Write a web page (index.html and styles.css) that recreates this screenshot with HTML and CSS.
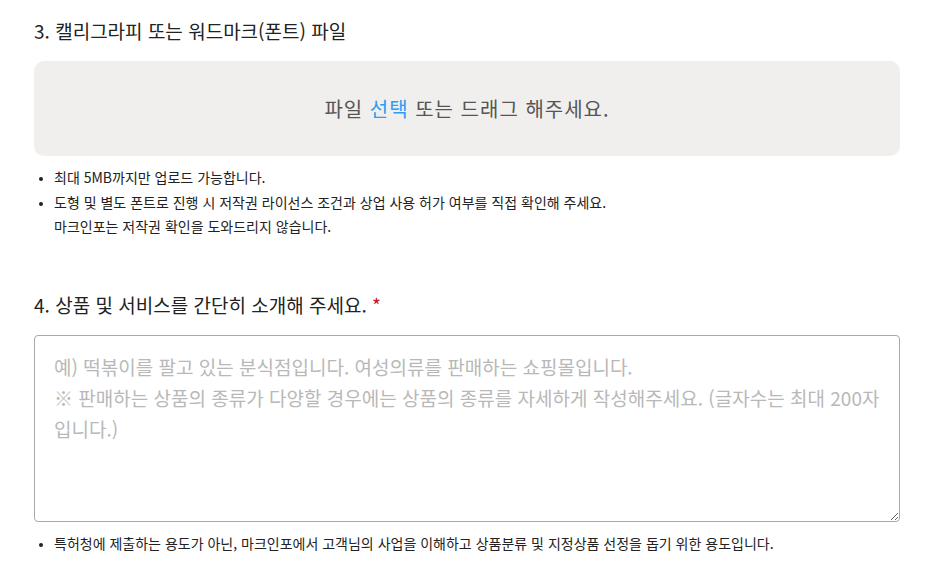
FILE: index.html
```html
<!DOCTYPE html>
<html lang="ko">
<head>
    <meta charset="UTF-8">
    <meta name="viewport" content="width=device-width, initial-scale=1.0">
    <title>상표 출원 정보</title>
    <link rel="stylesheet" href="styles.css">
</head>
<body>
    <div class="form">
        <div class="section">
            <h3 class="label">3. 캘리그라피 또는 워드마크(폰트) 파일</h3>
            <div class="dropzone">
                <span>파일 <span class="pick">선택</span> 또는 드래그 해주세요.</span>
            </div>
            <ul class="notes">
                <li>최대 5MB까지만 업로드 가능합니다.</li>
                <li>도형 및 별도 폰트로 진행 시 저작권 라이선스 조건과 상업 사용 허가 여부를 직접 확인해 주세요.<br>마크인포는 저작권 확인을 도와드리지 않습니다.</li>
            </ul>
        </div>
        <div class="section">
            <h3 class="label">4. 상품 및 서비스를 간단히 소개해 주세요. <span class="req">*</span></h3>
            <textarea class="intro" placeholder="예) 떡볶이를 팔고 있는 분식점입니다. 여성의류를 판매하는 쇼핑몰입니다.
※ 판매하는 상품의 종류가 다양할 경우에는 상품의 종류를 자세하게 작성해주세요. (글자수는 최대 200자입니다.)"></textarea>
            <ul class="notes">
                <li>특허청에 제출하는 용도가 아닌, 마크인포에서 고객님의 사업을 이해하고 상품분류 및 지정상품 선정을 돕기 위한 용도입니다.</li>
            </ul>
        </div>
    </div>
</body>
</html>
```

FILE: styles.css
```css
body {
    margin: 0;
    padding: 0;
    background: #fff;
    color: #222;
    font-family: "Noto Sans CJK KR", "Noto Sans", sans-serif;
}
.form {
    width: 866px;
    padding: 16px 0 0 34px;
}
.section {
    margin-bottom: 51px;
}
.section:last-child {
    margin-bottom: 0;
}
.label {
    font-size: 19px;
    font-weight: 400;
    line-height: 30px;
    margin: 0 0 15px;
}
.req {
    color: #c8102e;
}
.dropzone {
    height: 95px;
    background: #f0efed;
    border-radius: 10px;
    display: flex;
    justify-content: center;
    align-items: center;
    font-size: 20px;
    color: #555;
    letter-spacing: 1px;
}
.pick {
    color: #2a9df4;
}
.notes {
    margin: 9px 0 0;
    padding-left: 20px;
    font-size: 14px;
    line-height: 24.5px;
    color: #222;
}
.notes li::marker {
    font-size: 11px;
}
.intro {
    display: block;
    box-sizing: border-box;
    width: 866px;
    height: 187px;
    margin: 3px 0 0;
    padding: 15px 19px;
    border: 1px solid #a9a9a9;
    border-radius: 4px;
    font-family: inherit;
    font-size: 19px;
    line-height: 31px;
    color: #222;
}
.intro::placeholder {
    color: #b8b8b8;
}
```
